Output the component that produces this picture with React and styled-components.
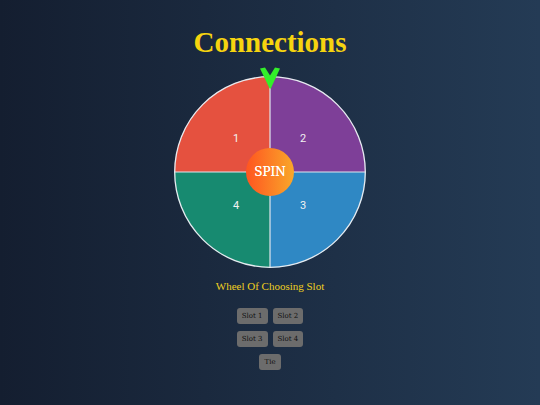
import { createGlobalStyle, styled } from "styled-components";

const GlobalStyle = createGlobalStyle`
  html, body {
    margin: 0;
    padding: 0;
  }
  body {
    min-height: 100vh;
    background: linear-gradient(to right, #141e30, #243b55);
    font-family: "Liberation Serif", serif;
  }
`;

const slots = [
  { label: "1", x: 62, y: 62 },
  { label: "2", x: 129, y: 62 },
  { label: "3", x: 129, y: 129 },
  { label: "4", x: 62, y: 129 },
];

export default function App() {
  return (
    <>
      <GlobalStyle />
      <Page>
        <Title>Connections</Title>
        <Wheel>
          <svg width="192" height="192" viewBox="0 0 192 192">
            <path d="M96 96 L96 0.5 A95.5 95.5 0 0 0 0.5 96 Z" fill="#e5513f" />
            <path d="M96 96 L191.5 96 A95.5 95.5 0 0 0 96 0.5 Z" fill="#7e3f98" />
            <path d="M96 96 L96 191.5 A95.5 95.5 0 0 0 191.5 96 Z" fill="#2f88c4" />
            <path d="M96 96 L0.5 96 A95.5 95.5 0 0 0 96 191.5 Z" fill="#178a70" />
            <line x1="96" y1="0.5" x2="96" y2="191.5" stroke="#dfe6ee" strokeWidth="1.2" />
            <line x1="0.5" y1="96" x2="191.5" y2="96" stroke="#dfe6ee" strokeWidth="1.2" />
            <circle cx="96" cy="96" r="95.3" fill="none" stroke="#e6ebf0" strokeWidth="1.3" />
          </svg>
          {slots.map((s) => (
            <SlotLabel key={s.label} style={{ left: s.x, top: s.y }}>
              {s.label}
            </SlotLabel>
          ))}
          <Pointer width="20" height="22" viewBox="0 0 20 22">
            <path d="M0 1.5 L5 0.5 L10 8.5 L15 0.5 L20 1.5 L10.8 21.5 L9.6 21.5 Z" fill="#33ee2a" />
          </Pointer>
          <SpinButton>SPIN</SpinButton>
        </Wheel>
        <Caption>Wheel Of Choosing Slot</Caption>
        <ButtonGrid>
          <ButtonRow>
            <SlotButton>Slot 1</SlotButton>
            <SlotButton>Slot 2</SlotButton>
          </ButtonRow>
          <ButtonRow>
            <SlotButton>Slot 3</SlotButton>
            <SlotButton>Slot 4</SlotButton>
          </ButtonRow>
          <ButtonRow>
            <SlotButton>Tie</SlotButton>
          </ButtonRow>
        </ButtonGrid>
      </Page>
    </>
  );
}

const Page = styled.div`
  display: flex;
  flex-direction: column;
  align-items: center;
  padding-top: 25px;
`;

const Title = styled.h1`
  margin: 0;
  font-family: "Liberation Serif", serif;
  font-size: 29px;
  line-height: 34px;
  font-weight: bold;
  color: #f6d40f;
`;

const Wheel = styled.div`
  position: relative;
  width: 192px;
  height: 192px;
  margin-top: 17px;

  svg {
    display: block;
  }
`;

const SlotLabel = styled.span`
  position: absolute;
  transform: translate(-50%, -50%);
  font-family: "Roboto", sans-serif;
  font-size: 11px;
  color: #f2f2f2;
`;

const Pointer = styled.svg`
  position: absolute;
  top: -9px;
  left: 86px;
`;

const SpinButton = styled.button`
  position: absolute;
  left: 50%;
  top: 50%;
  width: 48px;
  height: 48px;
  transform: translate(-50%, -50%);
  border: none;
  border-radius: 50%;
  padding: 0;
  background: linear-gradient(to right, #ff5520, #f9a72a);
  color: #fff;
  font-family: "DejaVu Serif", serif;
  font-size: 12px;
  text-shadow: 0 0 0.4px #fff;
  cursor: pointer;
`;

const Caption = styled.p`
  margin: 11px 0 0;
  font-size: 11px;
  line-height: 14px;
  color: #f0cf1f;
`;

const ButtonGrid = styled.div`
  display: flex;
  flex-direction: column;
  align-items: center;
  gap: 7px;
  margin-top: 15px;
`;

const ButtonRow = styled.div`
  display: flex;
  gap: 5px;
`;

const SlotButton = styled.button`
  height: 16px;
  padding: 0 5px;
  border: none;
  border-radius: 3px;
  background: #6c6c6c;
  color: #111;
  font-family: "DejaVu Serif", serif;
  font-size: 7px;
  cursor: pointer;
`;
